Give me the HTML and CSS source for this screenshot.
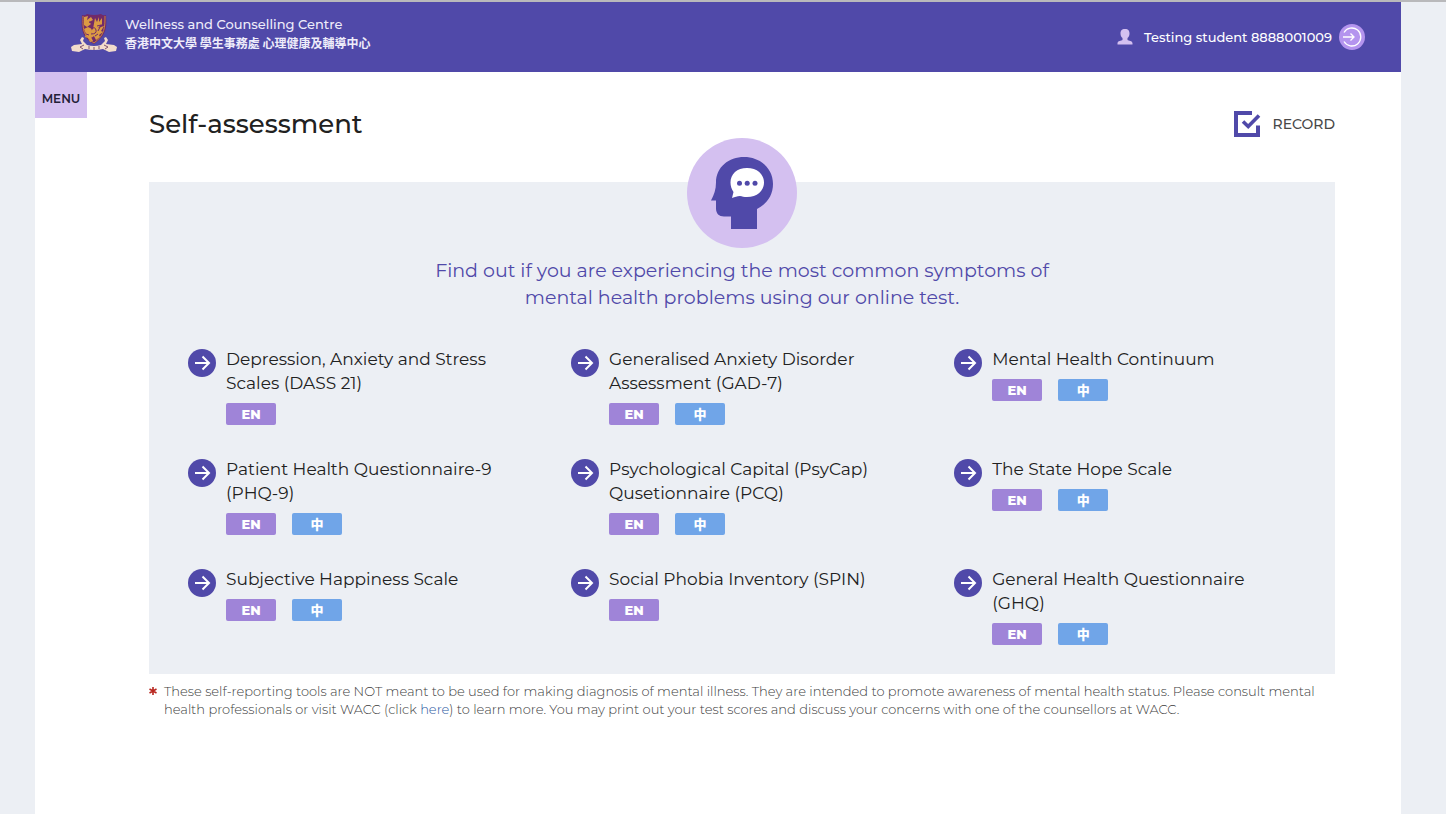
FILE: index.html
```html
<!DOCTYPE html>
<html lang="en">
<head>
<meta charset="utf-8">
<meta name="viewport" content="width=device-width, initial-scale=1">
<title>Self-assessment</title>
<link rel="stylesheet" href="styles.css">
</head>
<body>
<svg class="defs" width="0" height="0" aria-hidden="true">
  <symbol id="arrow" viewBox="0 0 28 28">
    <circle cx="14" cy="14" r="14" fill="#5049a9"/>
    <path d="M7 14h13M14.500 7.500l6.500 6.500-6.500 6.500" fill="none" stroke="#fff" stroke-width="2"/>
  </symbol>
</svg>
<div class="shell">
  <header class="topbar">
    <a class="brand" href="#">
      <svg class="crest" viewBox="0 0 46 38" aria-hidden="true">
        <path d="M11 1q3 1 5-1 7 2 14 0 2 2 5 1c1 12 1 20-12 29C10 23 10 13 11 1z" fill="#712a69"/>
        <path d="M13 3l4-1-1 4 4-3 2 3-4 2 2 2-4 3-3-2zM24 4l2 4 2-5v5l3-4v6l-4 4 6-2-3 5 2 1-4 3 1 2-4 3-2-4-3 2 1-5-3-1 4-3zM13 15l4-2 4 2-2 3 3 2-2 3 2 4-3 1-2-4-3-1 1-3z" fill="#dc9b43"/>
        <path d="M12 2c0 12-1 19 11 27C34 21 34 13 34 2" fill="none" stroke="#c7843e" stroke-width="1"/>
        <path d="M18 8l4 1-2 4M26 12l4-1-3 6M15 20l3 1M24 22l3-2M20 15q4-3 5 1t-5 4" fill="none" stroke="#712a69"/>
        <path d="M11 23l2 1-1 3 4 4q7 2 14 0l4-4-1-3 2-1 2 3-2 4 8 1 3 2-1 4-7 1-6-3q-9 2-18 0l-6 3-7-1-1-4 3-2 8-1-2-4z" fill="#f2dccb"/>
        <path d="M13 31l-4 2 3 2M33 31l4 2-3 2M18 32v3M23 33v3M28 32v3" fill="none" stroke="#7f526f"/>
      </svg>
      <span class="brand-text">
        <span class="brand-name">Wellness and Counselling Centre</span>
        <span class="brand-zh" lang="zh-Hant">香港中文大學 學生事務處 心理健康及輔導中心</span>
      </span>
    </a>
    <div class="account">
      <svg width="16" height="16" viewBox="0 0 16 16" aria-hidden="true"><path d="M8 0c3.500 0 4.500 2 4.500 4.500 0 2-.8 3.500-2 4.500v2c1 .8 5 .7 5 3.200V15.500H.5v-1.300C.5 11.700 4.500 11.800 5.500 11V9c-1.200-1-2-2.500-2-4.500C3.500 2 4.500 0 8 0z" fill="#d4c0f0"/></svg>
      <span class="user">Testing student 8888001009</span>
      <button class="logout" type="button" aria-label="Log out">
        <svg width="26" height="26" viewBox="0 0 26 26" aria-hidden="true"><circle cx="13" cy="13" r="13" fill="#b494ee"/><path d="M5 8.500a9 9 0 1 1 0 9M4 13h11M11.500 9.500L15 13l-3.500 3.500" fill="none" stroke="#fff" stroke-width="1.300"/></svg>
      </button>
    </div>
  </header>
  <div class="body">
    <button class="menu" type="button">MENU</button>
    <main class="content">
      <div class="title-row">
        <h1 class="title">Self-assessment</h1>
        <a class="record" href="#">
          <svg width="27" height="26" viewBox="0 0 27 26" aria-hidden="true"><path d="M18 2H2v22h22v-9.500" fill="none" stroke="#5049a9" stroke-width="4"/><path d="M9 10.500l5.200 5L25 4.500" fill="none" stroke="#5049a9" stroke-width="3.600"/></svg>
          <span>RECORD</span>
        </a>
      </div>
      <section class="panel">
        <svg class="head" viewBox="0 0 110 110" aria-hidden="true">
          <circle cx="55" cy="55" r="55" fill="#d4c0f0"/>
          <path d="M44 91V78.500H37c-5 0-8-3-8-8V62.500h-5c3-6 5-11 5-18C29 29 42 19 57 19c17 0 29 12 29 27 0 11-6 20-16 25v20z" fill="#5049a9"/>
          <path d="M60 30c10 0 17 6 17 14.500S70 59 60 59c-3 0-5-.5-7-1-3 0-5 1-8 2l1.500-6c-2-3-3-6-3-9.500C43.500 36 50 30 60 30z" fill="#fff"/>
          <g fill="#5049a9"><circle cx="52.500" cy="45.300" r="2.500"/><circle cx="60.200" cy="45.300" r="2.500"/><circle cx="68" cy="45.300" r="2.500"/></g>
        </svg>
        <p class="intro">Find out if you are experiencing the most common symptoms of mental health problems using our online test.</p>
        <ul class="tests">
          <li class="test"><svg class="arrow"><use href="#arrow"/></svg><div class="info"><h2 class="name">Depression, Anxiety and Stress Scales (DASS 21)</h2><div class="langs"><a class="lang en" href="#">EN</a></div></div></li>
          <li class="test"><svg class="arrow"><use href="#arrow"/></svg><div class="info"><h2 class="name">Generalised Anxiety Disorder Assessment (GAD-7)</h2><div class="langs"><a class="lang en" href="#">EN</a><a class="lang zh" href="#">中</a></div></div></li>
          <li class="test"><svg class="arrow"><use href="#arrow"/></svg><div class="info"><h2 class="name">Mental Health Continuum</h2><div class="langs"><a class="lang en" href="#">EN</a><a class="lang zh" href="#">中</a></div></div></li>
          <li class="test"><svg class="arrow"><use href="#arrow"/></svg><div class="info"><h2 class="name">Patient Health Questionnaire-9 (PHQ-9)</h2><div class="langs"><a class="lang en" href="#">EN</a><a class="lang zh" href="#">中</a></div></div></li>
          <li class="test"><svg class="arrow"><use href="#arrow"/></svg><div class="info"><h2 class="name">Psychological Capital (PsyCap) Qusetionnaire (PCQ)</h2><div class="langs"><a class="lang en" href="#">EN</a><a class="lang zh" href="#">中</a></div></div></li>
          <li class="test"><svg class="arrow"><use href="#arrow"/></svg><div class="info"><h2 class="name">The State Hope Scale</h2><div class="langs"><a class="lang en" href="#">EN</a><a class="lang zh" href="#">中</a></div></div></li>
          <li class="test"><svg class="arrow"><use href="#arrow"/></svg><div class="info"><h2 class="name">Subjective Happiness Scale</h2><div class="langs"><a class="lang en" href="#">EN</a><a class="lang zh" href="#">中</a></div></div></li>
          <li class="test"><svg class="arrow"><use href="#arrow"/></svg><div class="info"><h2 class="name">Social Phobia Inventory (SPIN)</h2><div class="langs"><a class="lang en" href="#">EN</a></div></div></li>
          <li class="test"><svg class="arrow"><use href="#arrow"/></svg><div class="info"><h2 class="name">General Health Questionnaire (GHQ)</h2><div class="langs"><a class="lang en" href="#">EN</a><a class="lang zh" href="#">中</a></div></div></li>
        </ul>
      </section>
      <div class="note">
        <svg class="star" viewBox="0 0 8 18" aria-hidden="true"><path d="M4 5v8M.5 7l7 4M7.500 7l-7 4" stroke="#b8261f" stroke-width="1.600"/></svg>
        <p class="note-text">These self-reporting tools are NOT meant to be used for making diagnosis of mental illness. They are intended to promote awareness of mental health status. Please consult mental health professionals or visit WACC (click <a class="here" href="#">here</a>) to learn more. You may print out your test scores and discuss your concerns with one of the counsellors at WACC.</p>
      </div>
    </main>
  </div>
</div>
</body>
</html>
```
FILE: styles.css
```css
* { box-sizing: border-box; }
body {
  margin: 0;
  min-height: 100vh;
  display: flex;
  flex-direction: column;
  background: #eceff4;
  border-top: 2px solid #b9b9bb;
  font-family: Montserrat, Inter, "Noto Sans CJK TC", sans-serif;
  color: #212121;
}
a { color: inherit; text-decoration: none; }
button { font: inherit; border: 0; padding: 0; background: none; cursor: pointer; }
.defs { position: absolute; }
.shell { flex: 1; margin: 0 45px 0 35px; background: #fff; }
.topbar {
  display: flex;
  align-items: center;
  justify-content: space-between;
  height: 70px;
  padding: 0 36px;
  background: #5049a9;
  color: #fff;
}
.brand { display: flex; gap: 8px; padding-bottom: 8px; }
.crest { width: 46px; height: 38px; }
.brand-text { display: flex; flex-direction: column; color: #eeecfa; }
.brand-name { font-size: 13px; line-height: 20px; font-weight: 500; }
.brand-zh { font-family: "Noto Sans CJK TC", sans-serif; font-size: 12px; line-height: 18px; font-weight: 700; }
.account { display: flex; align-items: center; }
.user { margin: 0 7px 0 11px; font-size: 13px; font-weight: 500; }
.logout, .logout svg { display: block; }
.body { position: relative; }
.menu {
  position: absolute;
  left: 0;
  top: 0;
  width: 52px;
  height: 46px;
  padding-top: 6px;
  background: #d4c0f0;
  color: #242038;
  font-size: 12px;
  font-weight: 600;
}
.content { padding: 32px 66px 32px 114px; }
.title-row { display: flex; align-items: center; justify-content: space-between; height: 40px; }
.title { margin: 0; font-size: 26px; line-height: 40px; font-weight: 500; }
.record { display: flex; align-items: center; gap: 11px; color: #484848; font-size: 14px; font-weight: 500; }
.panel {
  display: flex;
  flex-direction: column;
  align-items: center;
  margin-top: 38px;
  padding-bottom: 29px;
  background: #eceff4;
}
.head { width: 110px; height: 110px; margin-top: -44px; }
.intro { width: 640px; max-width: 100%; margin: 9px 0 36px; text-align: center; color: #5049a9; font-size: 19px; line-height: 27px; }
.tests {
  align-self: stretch;
  display: grid;
  grid-template-columns: repeat(3, 33.4%);
  row-gap: 32px;
  margin: 0;
  padding: 0 0 0 39px;
  list-style: none;
}
.test { display: flex; gap: 10px; }
.arrow { flex: none; width: 28px; height: 28px; margin-top: 2px; }
.info { max-width: 284px; }
.name { margin: 0; font-size: 17px; line-height: 24px; font-weight: 400; }
.langs { display: flex; gap: 16px; margin-top: 8px; }
.lang { width: 50px; height: 22px; border-radius: 2px; color: #fff; font-size: 13px; line-height: 22px; font-weight: 800; text-align: center; }
.en { background: #9f84d8; }
.zh { background: #70a5e8; }
.note { display: flex; gap: 7px; margin-top: 8px; color: #404040; }
.star { flex: none; width: 8px; height: 18px; }
.note-text { margin: 0; font-size: 13px; line-height: 18px; font-weight: 300; }
.here { color: #2c5a9f; }
```
